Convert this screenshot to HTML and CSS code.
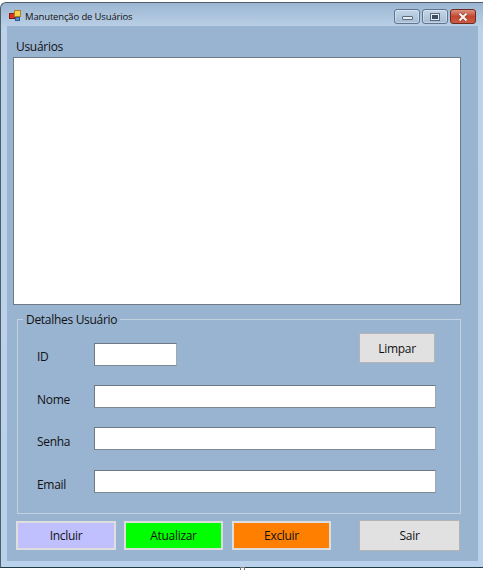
FILE: index.html
```html
<!DOCTYPE html>
<html lang="pt">
<head>
    <meta charset="UTF-8">
    <title>Manutenção de Usuários</title>
    <link rel="stylesheet" href="styles.css">
</head>
<body>
    <div class="window">
        <div class="titlebar">
            <svg class="app-icon" width="14" height="14" viewBox="0 0 14 14">
                <rect x="0.5" y="3.5" width="5" height="5" fill="#e03020" stroke="#8a1a10"/>
                <rect x="5.5" y="0.5" width="6" height="6" fill="#f8d050" stroke="#b08020"/>
                <rect x="6.5" y="7.5" width="4" height="3" fill="#5a90d8" stroke="#30589a"/>
            </svg>
            <span class="title">Manutenção de Usuários</span>
            <div class="caption-btns">
                <div class="cap-btn"><span class="min-glyph"></span></div>
                <div class="cap-btn"><span class="max-glyph"></span></div>
                <div class="cap-btn close">
                    <svg width="14" height="10" viewBox="0 0 14 10">
                        <path d="M3.5 1.5 L10.5 8.5 M10.5 1.5 L3.5 8.5" stroke="#8e3a2c" stroke-width="3.6" fill="none"/>
                        <path d="M3.5 1.5 L10.5 8.5 M10.5 1.5 L3.5 8.5" stroke="#f6f2f0" stroke-width="2.2" fill="none"/>
                    </svg>
                </div>
            </div>
        </div>

        <div class="client">
            <div class="list-label">Usuários</div>
            <div class="listbox"></div>

            <div class="group">
                <div class="legend">Detalhes Usuário</div>
                <div class="row row-id">
                    <label>ID</label>
                    <input class="txt txt-id" type="text">
                    <button class="btn btn-limpar">Limpar</button>
                </div>
                <div class="row">
                    <label>Nome</label>
                    <input class="txt" type="text">
                </div>
                <div class="row">
                    <label>Senha</label>
                    <input class="txt" type="text">
                </div>
                <div class="row">
                    <label class="label-email">Email</label>
                    <input class="txt" type="text">
                </div>
            </div>

            <div class="actions">
                <button class="action incluir">Incluir</button>
                <button class="action atualizar">Atualizar</button>
                <button class="action excluir">Excluir</button>
                <button class="btn btn-sair">Sair</button>
            </div>
        </div>
    </div>
    <div class="resize-handle"></div>
</body>
</html>
```

FILE: styles.css
```css
html, body {
    margin: 0;
    height: 570px;
    overflow: hidden;
    background-color: #ffffff;
}
body {
    font-family: "Open Sans", "Noto Sans", sans-serif;
    font-size: 12px;
    letter-spacing: -0.3px;
    color: #111;
}
.window {
    box-sizing: border-box;
    width: 483px;
    height: 566px;
    margin: 2px 0 0 0;
    padding: 0 5px 6px 6px;
    background: linear-gradient(to bottom, #9cb6d2 0, #bcd2e8 26px, #b9d1ea 100%);
    border: 1px solid #4f5d6a;
    border-right: none;
    border-bottom-color: #1f3a44;
    border-radius: 6px 0 0 0;
    display: flex;
    flex-direction: column;
}
.titlebar {
    height: 23px;
    display: flex;
    align-items: center;
    flex-shrink: 0;
}
.app-icon {
    margin: 4px 2px 0 2px;
}
.title {
    font-size: 9.5px;
    letter-spacing: -0.15px;
    margin-top: 4px;
    color: #111;
}
.caption-btns {
    margin: 4px 2px 0 auto;
    display: flex;
    gap: 2px;
}
.cap-btn {
    box-sizing: border-box;
    width: 26px;
    height: 15px;
    border: 1px solid #5f7590;
    border-radius: 3px;
    background: linear-gradient(to bottom, #c4d6e8, #a4bcd4);
    box-shadow: inset 0 0 0 1px rgba(255, 255, 255, 0.35);
    display: flex;
    align-items: center;
    justify-content: center;
}
.cap-btn.close {
    border-color: #6e2a20;
    background: linear-gradient(to bottom, #dc9282, #c4472f 50%, #cc5c44);
    box-shadow: none;
}
.min-glyph {
    width: 11px;
    height: 4px;
    margin-top: 3px;
    background: #e6edf4;
    border: 1px solid #5a6b7e;
    border-radius: 1px;
    box-sizing: border-box;
}
.max-glyph {
    width: 10px;
    height: 8px;
    box-sizing: border-box;
    background: #3f4f60;
    border: 2px solid #e6edf4;
    outline: 1px solid #5a6b7e;
    outline-offset: -1px;
}
.client {
    flex: 1;
    background-color: #99b4d1;
    padding: 0 0 0 6px;
    display: flex;
    flex-direction: column;
}
.list-label {
    margin: 10px 0 0 3px;
    height: 21px;
    line-height: 21px;
}
.listbox {
    box-sizing: border-box;
    width: 448px;
    height: 248px;
    background-color: #fff;
    border: 1px solid #6e7a86;
}
.group {
    box-sizing: border-box;
    width: 444px;
    height: 195px;
    margin: 14px 0 0 4px;
    border: 1px solid #c4d2e0;
    position: relative;
    padding: 23px 24px 0 19px;
}
.legend {
    position: absolute;
    top: -9px;
    left: 5px;
    padding: 0 3px;
    line-height: 17px;
    background-color: #99b4d1;
}
.row {
    display: flex;
    align-items: center;
    height: 23px;
    margin-bottom: 19px;
}
.row:nth-child(4) {
    margin-bottom: 20px;
}
.row label {
    width: 57px;
    flex-shrink: 0;
    margin-top: 6px;
}
.row-id label {
    margin-top: 4px;
}
.row .label-email {
    margin-top: 5px;
}
.txt {
    box-sizing: border-box;
    flex: 1;
    min-width: 0;
    height: 23px;
    margin: 0;
    padding: 0;
    background-color: #fff;
    border: 1px solid #6f7882;
    border-right-color: #a0a8b0;
    border-bottom-color: #808890;
    outline: none;
}
.row-id .txt-id {
    flex: none;
    width: 83px;
}
.btn {
    box-sizing: border-box;
    font-family: inherit;
    font-size: 12px;
    letter-spacing: inherit;
    color: #111;
    background-color: #e1e1e1;
    border: 1px solid #b4b4b4;
    padding: 0;
}
.btn-limpar {
    width: 76px;
    height: 30px;
    margin: -13px 1px 0 auto;
}
.actions {
    display: flex;
    margin: 6px 0 0 3px;
    align-items: flex-start;
    gap: 8px;
}
.action {
    box-sizing: border-box;
    width: 100px;
    height: 29px;
    margin-top: 1px;
    padding: 0;
    font-family: inherit;
    font-size: 12px;
    letter-spacing: inherit;
    color: #111;
    border: 2px solid #dedede;
}
.incluir {
    background-color: #c0c0ff;
}
.atualizar {
    width: 99px;
    background-color: #00ff00;
}
.excluir {
    width: 99px;
    margin-left: 1px;
    background-color: #ff8000;
}
.btn-sair {
    width: 101px;
    height: 31px;
    margin-left: 20px;
}
.resize-handle {
    position: absolute;
    left: 240px;
    top: 567px;
    width: 5px;
    height: 3px;
    background-color: #fff;
    border: 1px solid #777;
    border-bottom: none;
    box-sizing: border-box;
}
```
